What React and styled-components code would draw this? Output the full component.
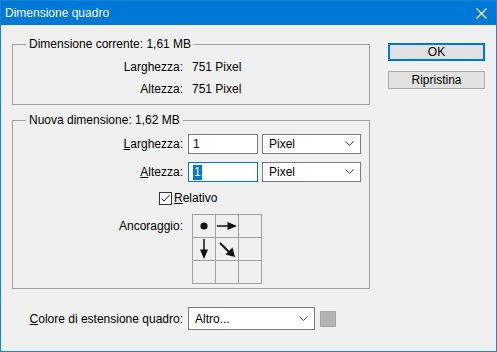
import React from "react";
import styled, { createGlobalStyle } from "styled-components";

const GlobalStyle = createGlobalStyle`
  html, body { margin: 0; padding: 0; }
  body {
    font-family: "Liberation Sans", Arial, sans-serif;
    font-size: 12px;
    color: #000;
    background: #f0f0f0;
  }
`;

const Chevron = () => (
  <svg width="9" height="6" viewBox="0 0 9 6">
    <path d="M0.5 0.5 L4.5 4.5 L8.5 0.5" fill="none" stroke="#444" strokeWidth="1" />
  </svg>
);

const Dot = () => (
  <svg width="22" height="22" viewBox="0 0 22 22">
    <circle cx="11" cy="11" r="3.6" fill="#111" />
  </svg>
);

const ArrowRight = () => (
  <svg width="22" height="22" viewBox="0 0 22 22">
    <line x1="1" y1="11" x2="13" y2="11" stroke="#111" strokeWidth="1.5" />
    <polygon points="11.5,7 21,11 11.5,15" fill="#111" />
  </svg>
);

const ArrowDown = () => (
  <svg width="22" height="22" viewBox="0 0 22 22">
    <line x1="11" y1="1" x2="11" y2="13" stroke="#111" strokeWidth="1.5" />
    <polygon points="7,11.5 11,21 15,11.5" fill="#111" />
  </svg>
);

const ArrowDiag = () => (
  <svg width="22" height="22" viewBox="0 0 22 22">
    <line x1="4" y1="5" x2="14" y2="15" stroke="#111" strokeWidth="1.8" />
    <polygon points="19,19 9.5,16.5 16.5,9.5" fill="#111" />
  </svg>
);

const App = () => {
  const cells = [<Dot />, <ArrowRight />, null, <ArrowDown />, <ArrowDiag />, null, null, null, null];
  return (
    <>
      <GlobalStyle />
      <Window>
        <TitleBar>
          <Title>Dimensione quadro</Title>
          <CloseIcon>
            <svg width="11" height="11" viewBox="0 0 11 11">
              <path d="M0.5 0.5 L10.5 10.5 M10.5 0.5 L0.5 10.5" stroke="#fff" strokeWidth="1.1" />
            </svg>
          </CloseIcon>
        </TitleBar>
        <Body>
          <LeftColumn>
            <Group>
              <Legend>Dimensione corrente: 1,61 MB</Legend>
              <InfoRow>
                <Label>Larghezza:</Label>
                <Value>751 Pixel</Value>
              </InfoRow>
              <InfoRow>
                <Label>Altezza:</Label>
                <Value>751 Pixel</Value>
              </InfoRow>
            </Group>

            <Group $gap>
              <Legend>Nuova dimensione: 1,62 MB</Legend>
              <FieldRow $first>
                <Label><u>L</u>arghezza:</Label>
                <TextBox>1</TextBox>
                <Select $w={99}>
                  <span>Pixel</span>
                  <Chevron />
                </Select>
              </FieldRow>
              <FieldRow>
                <Label><u>A</u>ltezza:</Label>
                <TextBox $focused>
                  <Selected>1</Selected>
                </TextBox>
                <Select $w={99}>
                  <span>Pixel</span>
                  <Chevron />
                </Select>
              </FieldRow>
              <CheckRow>
                <CheckBox>
                  <svg width="11" height="11" viewBox="0 0 11 11">
                    <path d="M1.5 5.5 L4 8 L9.5 2" fill="none" stroke="#222" strokeWidth="1" />
                  </svg>
                </CheckBox>
                <span><u>R</u>elativo</span>
              </CheckRow>
              <AnchorRow>
                <AnchorLabel>Ancoraggio:</AnchorLabel>
                <AnchorGrid>
                  {cells.map((c, i) => (
                    <AnchorCell key={i}>{c}</AnchorCell>
                  ))}
                </AnchorGrid>
              </AnchorRow>
            </Group>

            <BottomRow>
              <BottomLabel><u>C</u>olore di estensione quadro:</BottomLabel>
              <Select $w={127} $h={23}>
                <span>Altro...</span>
                <Chevron />
              </Select>
              <Swatch />
            </BottomRow>
          </LeftColumn>

          <RightColumn>
            <Button $primary>OK</Button>
            <Button>Ripristina</Button>
          </RightColumn>
        </Body>
      </Window>
    </>
  );
};

export default App;

const Window = styled.div`
  width: 497px;
  height: 352px;
  box-sizing: border-box;
  border: 1px solid #1883d7;
  background: #f0f0f0;
  display: flex;
  flex-direction: column;
  overflow: hidden;
`;

const TitleBar = styled.div`
  height: 24px;
  background: #0078d7;
  color: #fff;
  display: flex;
  align-items: center;
  justify-content: space-between;
  padding: 0 8px 0 4px;
  flex-shrink: 0;
`;

const Title = styled.span`
  font-size: 12px;
`;

const CloseIcon = styled.span`
  display: flex;
  align-items: center;
  margin-right: 1px;
`;

const Body = styled.div`
  display: flex;
  padding: 0 0 0 11px;
`;

const LeftColumn = styled.div`
  width: 358px;
  display: flex;
  flex-direction: column;
  padding-top: 11px;
`;

const RightColumn = styled.div`
  display: flex;
  flex-direction: column;
  gap: 10px;
  margin-left: 18px;
  padding-top: 18px;
`;

const Button = styled.div`
  width: 97px;
  height: 18px;
  box-sizing: border-box;
  background: #e1e1e1;
  border: ${(p) => (p.$primary ? "2px solid #0078d7" : "1px solid #adadad")};
  display: flex;
  align-items: center;
  justify-content: center;
`;

const Group = styled.fieldset`
  margin: ${(p) => (p.$gap ? "7px 0 0" : "0")};
  padding: 0 0 4px 0;
  border: 1px solid #a0a0a0;
  min-width: 0;
`;

const Legend = styled.legend`
  margin-left: 13px;
  padding: 0 3px;
  line-height: 16px;
`;

const Label = styled.div`
  width: 170px;
  text-align: right;
  flex-shrink: 0;
`;

const InfoRow = styled.div`
  display: flex;
  align-items: center;
  height: 22px;
  &:first-of-type {
    margin-top: 4px;
  }
`;

const Value = styled.div`
  margin-left: 9px;
`;

const FieldRow = styled.div`
  display: flex;
  align-items: center;
  height: 20px;
  margin-top: ${(p) => (p.$first ? "6px" : "8px")};
`;

const TextBox = styled.div`
  width: 70px;
  height: 20px;
  box-sizing: border-box;
  margin-left: 5px;
  background: #fff;
  border: 1px solid ${(p) => (p.$focused ? "#0078d7" : "#7a7a7a")};
  display: flex;
  align-items: center;
  padding-left: 4px;
`;

const Selected = styled.span`
  background: #0078d7;
  color: #fff;
  line-height: 15px;
  padding: 0 1px;
`;

const Select = styled.div`
  width: ${(p) => p.$w}px;
  height: ${(p) => p.$h || 20}px;
  box-sizing: border-box;
  margin-left: ${(p) => (p.$h ? "5px" : "4px")};
  background: #fff;
  border: 1px solid #7a7a7a;
  display: flex;
  align-items: center;
  justify-content: space-between;
  padding: 0 6px 0 6px;
`;

const CheckRow = styled.div`
  display: flex;
  align-items: center;
  height: 14px;
  margin: 9px 0 0 146px;
  gap: 2px;
`;

const CheckBox = styled.div`
  width: 13px;
  height: 13px;
  box-sizing: border-box;
  border: 1px solid #333;
  background: #fff;
  display: flex;
  align-items: center;
  justify-content: center;
`;

const AnchorRow = styled.div`
  display: flex;
  align-items: flex-start;
  margin-top: 9px;
`;

const AnchorLabel = styled(Label)`
  line-height: 16px;
  margin-top: 4px;
`;

const AnchorGrid = styled.div`
  margin-left: 9px;
  display: grid;
  grid-template-columns: repeat(3, 22px);
  grid-template-rows: repeat(3, 22px);
  gap: 1px;
  padding: 1px;
  background: #a0a0a0;
`;

const AnchorCell = styled.div`
  background: #f0f0f0;
  display: flex;
  align-items: center;
  justify-content: center;
`;

const BottomRow = styled.div`
  display: flex;
  align-items: center;
  margin-top: 18px;
`;

const BottomLabel = styled.div`
  width: 171px;
  text-align: right;
`;

const Swatch = styled.div`
  width: 14px;
  height: 14px;
  margin-left: 5px;
  background: #b4b4b4;
  border: 1px solid #a8a8a8;
`;
